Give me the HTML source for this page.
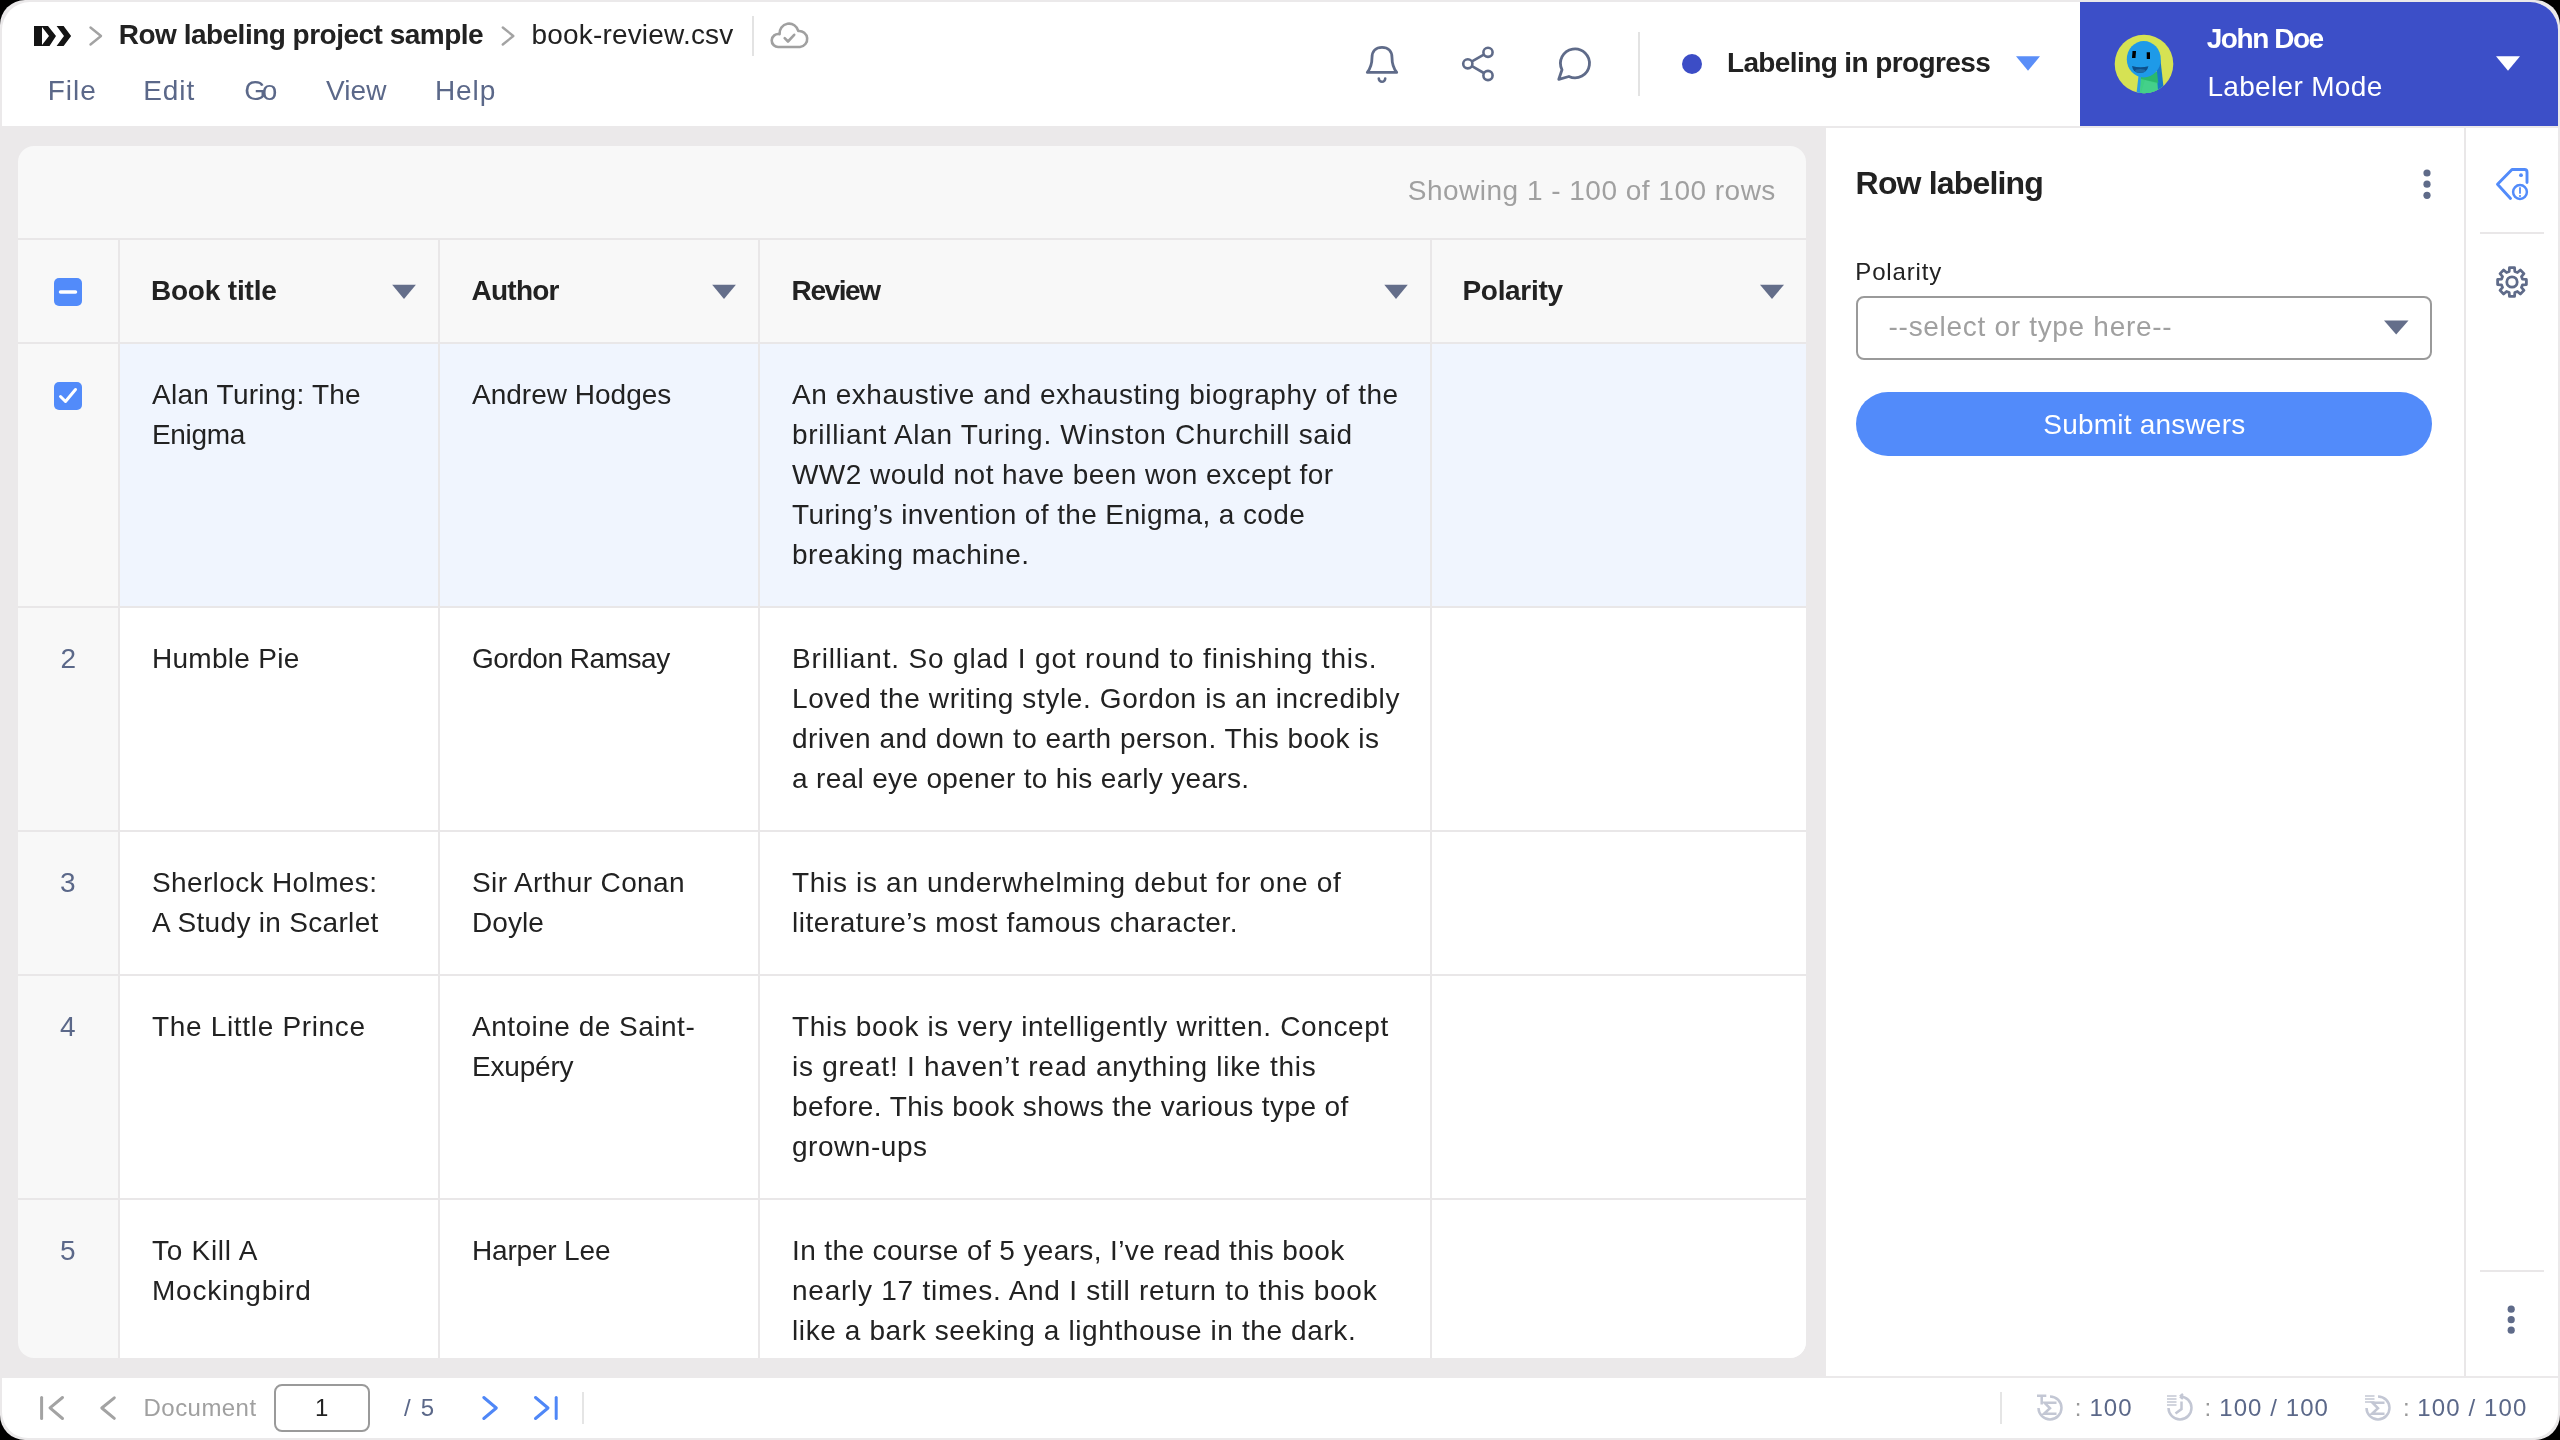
<!DOCTYPE html>
<html><head><meta charset="utf-8"><style>
html,body{margin:0;padding:0;width:2560px;height:1440px;overflow:hidden;background:#000}
.frame{position:absolute;left:0;top:0;width:2560px;height:1440px;border-radius:25px;background:#ebe9ea;overflow:hidden}
.b{position:absolute}
.tl{position:absolute;left:0;top:0;width:2560px;height:1440px;will-change:transform}
.t{position:absolute;white-space:nowrap;font-family:'Liberation Sans',sans-serif}
svg{position:absolute;left:0;top:0}
</style></head>
<body><div class="frame">
<div class="b" style="left:2px;top:2px;width:2556px;height:124px;background:#ffffff;border-radius:28px 28px 0 0"></div><div class="b" style="left:2080px;top:2px;width:478px;height:124px;background:#3c4fc8;border-radius:0 28px 0 0"></div><div class="b" style="left:18px;top:146px;width:1788px;height:1212px;background:#f8f8f8;border-radius:16px;overflow:hidden"></div><div class="b" style="left:18px;top:238px;width:1788px;height:2px;background:#e9e7e8;"></div><div class="b" style="left:18px;top:342px;width:1788px;height:2px;background:#e9e7e8;"></div><div class="b" style="left:120px;top:344px;width:1686px;height:262px;background:#f0f5fe;"></div><div class="b" style="left:18px;top:606px;width:1788px;height:2px;background:#e9e7e8;"></div><div class="b" style="left:120px;top:608px;width:1686px;height:222px;background:#ffffff;"></div><div class="b" style="left:18px;top:830px;width:1788px;height:2px;background:#e9e7e8;"></div><div class="b" style="left:120px;top:832px;width:1686px;height:142px;background:#ffffff;"></div><div class="b" style="left:18px;top:974px;width:1788px;height:2px;background:#e9e7e8;"></div><div class="b" style="left:120px;top:976px;width:1686px;height:222px;background:#ffffff;"></div><div class="b" style="left:18px;top:1198px;width:1788px;height:2px;background:#e9e7e8;"></div><div class="b" style="left:120px;top:1200px;width:1686px;height:158px;background:#ffffff;border-bottom-right-radius:16px"></div><div class="b" style="left:118px;top:240px;width:2px;height:1118px;background:#e9e7e8;"></div><div class="b" style="left:438px;top:240px;width:2px;height:1118px;background:#e9e7e8;"></div><div class="b" style="left:758px;top:240px;width:2px;height:1118px;background:#e9e7e8;"></div><div class="b" style="left:1430px;top:240px;width:2px;height:1118px;background:#e9e7e8;"></div><div class="b" style="left:1826px;top:128px;width:732px;height:1248px;background:#ffffff;"></div><div class="b" style="left:2464px;top:128px;width:2px;height:1248px;background:#e9e7e8;"></div><div class="b" style="left:2480px;top:232px;width:64px;height:2px;background:#e9e7e8;"></div><div class="b" style="left:2480px;top:1270px;width:64px;height:2px;background:#e9e7e8;"></div><div class="b" style="left:1856px;top:296px;width:576px;height:64px;background:transparent;box-sizing:border-box;border:2px solid #9a9a9a;border-radius:8px"></div><div class="b" style="left:1856px;top:392px;width:576px;height:64px;background:#528bfa;border-radius:32px"></div><div class="b" style="left:2px;top:1378px;width:2556px;height:60px;background:#ffffff;border-radius:0 0 26px 26px"></div><div class="b" style="left:274px;top:1384px;width:96px;height:48px;background:transparent;box-sizing:border-box;border:2px solid #9a9a9a;border-radius:8px"></div><div class="b" style="left:582px;top:1392px;width:2px;height:32px;background:#e5e5e5;"></div><div class="b" style="left:2000px;top:1392px;width:2px;height:32px;background:#e5e5e5;"></div><div class="b" style="left:752px;top:16px;width:2px;height:40px;background:#e3e3e3;"></div><div class="b" style="left:1638px;top:32px;width:2px;height:64px;background:#e3e3e3;"></div><div class="b" style="left:54px;top:278px;width:28px;height:28px;background:#528bfa;border-radius:5px"></div><div class="b" style="left:54px;top:382px;width:28px;height:28px;background:#528bfa;border-radius:5px"></div><div class="b" style="left:1682px;top:54px;width:20px;height:20px;background:#3c4dc6;border-radius:50%"></div>

<svg width="2560" height="1440" viewBox="0 0 2560 1440">
 <!-- logo -->
 <path d="M34 26 H48 L56 36 L49.5 46 H34 Z M42 27 V45 L49 36 Z" fill="#141414" fill-rule="evenodd"/>
 <path d="M56.6 26 H63.6 L71.1 36 L63.6 46 H56.6 L64 36 Z" fill="#141414"/>
 <!-- breadcrumb chevrons -->
 <path d="M90.5 27.5 L101 36 L90.5 44.5" fill="none" stroke="#a3a3a3" stroke-width="2.4" stroke-linecap="round" stroke-linejoin="round"/>
 <path d="M502.8 27.5 L513.3 36 L502.8 44.5" fill="none" stroke="#a3a3a3" stroke-width="2.4" stroke-linecap="round" stroke-linejoin="round"/>
 <!-- cloud -->
 <path d="M779 47 H800 A8 8 0 1 0 798.3 31 A9.5 9.5 0 0 0 779.6 34.2 A6.5 6.5 0 1 0 779 47 Z" fill="none" stroke="#a0a0a0" stroke-width="2.6" stroke-linejoin="round"/>
 <path d="M784.7 38.1 L788 41.5 L794.2 34.8" fill="none" stroke="#a0a0a0" stroke-width="2.6" stroke-linecap="round" stroke-linejoin="round"/>
 <!-- bell -->
 <path d="M1367.3 72.4 H1396.7 C1392.5 67 1392 62 1392 57.5 C1392 51 1388 47.3 1382 47.3 C1376 47.3 1372 51 1372 57.5 C1372 62 1371.5 67 1367.3 72.4 Z" fill="none" stroke="#5f6b89" stroke-width="2.8" stroke-linejoin="round"/>
 <path d="M1378.8 78.6 A3.2 3.2 0 0 0 1385.2 78.6" fill="none" stroke="#5f6b89" stroke-width="2.6" stroke-linecap="round"/>
 <!-- share -->
 <circle cx="1488" cy="52.3" r="4.6" fill="none" stroke="#5f6b89" stroke-width="2.6"/>
 <circle cx="1467.8" cy="63.8" r="4.6" fill="none" stroke="#5f6b89" stroke-width="2.6"/>
 <circle cx="1488" cy="75.5" r="4.6" fill="none" stroke="#5f6b89" stroke-width="2.6"/>
 <path d="M1472 61.4 L1483.8 54.7 M1472 66.2 L1483.8 73" stroke="#5f6b89" stroke-width="2.6"/>
 <!-- comment -->
 <path d="M1568.9 76.5 L1558.8 79.3 L1562 69.8 A14.5 14.5 0 1 1 1568.9 76.5 Z" fill="none" stroke="#5f6b89" stroke-width="2.8" stroke-linejoin="round"/>
 <!-- status triangle -->
 <path d="M2016 56.3 H2040 L2028 70.7 Z" fill="#5a8ef8"/>
 <!-- user triangle -->
 <path d="M2496 56.3 H2520 L2508 70.7 Z" fill="#ffffff"/>
 <!-- avatar -->
 <circle cx="2144" cy="64" r="29.3" fill="#d6e253"/>
 <clipPath id="av"><circle cx="2144" cy="64" r="29.3"/></clipPath>
 <g clip-path="url(#av)">
  <path d="M2138.5 76 L2141.8 76 L2140 96 L2136.2 96 Z" fill="#2a9be6"/>
  <path d="M2141 74 L2157 72 L2160 96 L2139.8 96 Z" fill="#3ecf83"/>
  <path d="M2145 80 L2158 84 L2160 96 L2140 96 Z" fill="#44d08a"/>
  <path d="M2155.5 60 L2160.5 60 L2164.5 96 L2158.5 96 Z" fill="#1878c8"/>
  <path d="M2141 74 L2157 72 L2158.3 83 L2141 79 Z" fill="#2ab86c"/>
  <ellipse cx="2143.8" cy="59.2" rx="17" ry="18.2" fill="#1e9ae8"/>
  <path d="M2132.5 51 L2136 51 L2135.5 58 L2132 58 Z" fill="#000"/>
  <path d="M2146.7 52.2 L2150 52.2 L2150 59 L2146.8 59 Z" fill="#000"/>
  <path d="M2132 66 Q2140 68.5 2148.4 66.3 Q2147 73 2140 73 Q2133 73 2132 66 Z" fill="#0d4f8a"/>
  <ellipse cx="2140.3" cy="70.8" rx="5.2" ry="1.9" fill="#1f6aa6"/>
 </g>
 <!-- header column triangles -->
 <path d="M392.2 284.8 H415.9 L404 298.9 Z" fill="#646e8a"/>
 <path d="M712.2 284.8 H735.9 L724 298.9 Z" fill="#646e8a"/>
 <path d="M1384.3 284.8 H1407.8 L1396 298.9 Z" fill="#646e8a"/>
 <path d="M1760 284.8 H1784 L1772 298.9 Z" fill="#646e8a"/>
 <!-- checkbox marks -->
 <path d="M60.5 292 H75.5" stroke="#fff" stroke-width="3.5" stroke-linecap="round"/>
 <path d="M60.5 396.5 L65.5 401.5 L75.5 389.5" fill="none" stroke="#fff" stroke-width="3" stroke-linecap="round" stroke-linejoin="round"/>
 <!-- panel kebab -->
 <circle cx="2427" cy="173" r="3.6" fill="#5f6b89"/>
 <circle cx="2427" cy="184.2" r="3.6" fill="#5f6b89"/>
 <circle cx="2427" cy="195.3" r="3.6" fill="#5f6b89"/>
 <!-- select triangle -->
 <path d="M2384 320.5 H2408.5 L2396.2 334.5 Z" fill="#646e8a"/>
 <!-- tag icon -->
 <path d="M2527 182.5 V172 Q2527 169.5 2524.5 169.5 H2512 L2497.5 184.3 L2510.5 198.5" fill="none" stroke="#528bfa" stroke-width="2.9" stroke-linecap="round" stroke-linejoin="round"/>
 <circle cx="2521" cy="175.2" r="1.9" fill="#528bfa"/>
 <circle cx="2520" cy="192" r="6.9" fill="none" stroke="#528bfa" stroke-width="2.5"/>
 <path d="M2520 188 V193" stroke="#528bfa" stroke-width="1.8" stroke-linecap="round"/>
 <circle cx="2520" cy="196" r="1.1" fill="#528bfa"/>
 <!-- gear -->
 <g transform="translate(2512 282)">
  <path d="M10.53 -2.82 L14.38 -2.54 L14.38 2.54 L10.53 2.82 L9.44 5.45 L11.96 8.37 L8.37 11.96 L5.45 9.44 L2.82 10.53 L2.54 14.38 L-2.54 14.38 L-2.82 10.53 L-5.45 9.44 L-8.37 11.96 L-11.96 8.37 L-9.44 5.45 L-10.53 2.82 L-14.38 2.54 L-14.38 -2.54 L-10.53 -2.82 L-9.44 -5.45 L-11.96 -8.37 L-8.37 -11.96 L-5.45 -9.44 L-2.82 -10.53 L-2.54 -14.38 L2.54 -14.38 L2.82 -10.53 L5.45 -9.44 L8.37 -11.96 L11.96 -8.37 L9.44 -5.45 Z" fill="none" stroke="#5f6b89" stroke-width="2.8" stroke-linejoin="round"/>
  <circle cx="0" cy="0" r="5.2" fill="none" stroke="#5f6b89" stroke-width="2.8"/>
 </g>
 <!-- rail kebab -->
 <circle cx="2511.2" cy="1309.2" r="3.6" fill="#5f6b89"/>
 <circle cx="2511.2" cy="1319.7" r="3.6" fill="#5f6b89"/>
 <circle cx="2511.2" cy="1330.2" r="3.6" fill="#5f6b89"/>
 <!-- footer nav -->
 <path d="M41.6 1397.5 V1418.5" stroke="#a3a3a3" stroke-width="3" stroke-linecap="round"/>
 <path d="M62.5 1397.5 L50 1407.8 L62.5 1418.5" fill="none" stroke="#a3a3a3" stroke-width="3" stroke-linecap="round" stroke-linejoin="round"/>
 <path d="M114.3 1397.8 L101.8 1408 L114.3 1418.3" fill="none" stroke="#a3a3a3" stroke-width="3" stroke-linecap="round" stroke-linejoin="round"/>
 <path d="M483.8 1397.5 L496.3 1408 L483.8 1418.5" fill="none" stroke="#4f87f7" stroke-width="3" stroke-linecap="round" stroke-linejoin="round"/>
 <path d="M535.5 1397.5 L548 1408 L535.5 1418.5" fill="none" stroke="#4f87f7" stroke-width="3" stroke-linecap="round" stroke-linejoin="round"/>
 <path d="M556.2 1397.5 V1418.5" stroke="#4f87f7" stroke-width="3" stroke-linecap="round"/>
 <!-- footer stats icons -->
 <g fill="none" stroke="#c3c7d4" stroke-width="2.5">
  <path d="M2050 1396.4 A11.5 11.5 0 1 1 2038.5 1408"/>
  <path d="M2037 1395.8 H2046.3 M2041.7 1395.8 V1404.6"/>
  <path d="M2056.5 1402.7 H2044.5 L2050 1408.3 L2044 1413.7 H2056.5"/>
  <path d="M2180 1396.4 A11.5 11.5 0 1 1 2168.5 1408"/>
  <path d="M2180 1396.4 L2183 1394 M2180 1396.4 L2183 1398.8"/>
  <path d="M2167 1396 H2176.5 M2167 1399 H2176.5 M2167 1402 H2176.5 M2167 1405 H2176.5" stroke-width="1.6"/>
  <path d="M2181.5 1401.5 V1409 L2175.5 1413.5"/>
  <path d="M2378 1396.4 A11.5 11.5 0 1 1 2366.5 1408"/>
  <path d="M2365 1396 H2374.5 M2365 1399 H2374.5 M2365 1402 H2374.5" stroke-width="1.6"/>
  <path d="M2384.5 1402.7 H2372.5 L2378 1408.3 L2372 1413.7 H2384.5"/>
 </g>
</svg>

<div class="tl"><div class="t" style="left:118.8px;top:15px;font-size:28px;line-height:40px;font-weight:700;color:#222222;letter-spacing:-0.512px">Row labeling project sample</div><div class="t" style="left:531.4px;top:15px;font-size:28px;line-height:40px;font-weight:400;color:#222222;letter-spacing:0.193px">book-review.csv</div><div class="t" style="left:47.7px;top:71px;font-size:28px;line-height:40px;font-weight:400;color:#5b6889;letter-spacing:1.000px">File</div><div class="t" style="left:143.3px;top:71px;font-size:28px;line-height:40px;font-weight:400;color:#5b6889;letter-spacing:0.900px">Edit</div><div class="t" style="left:244.3px;top:71px;font-size:28px;line-height:40px;font-weight:400;color:#5b6889;letter-spacing:-4.300px">Go</div><div class="t" style="left:325.9px;top:71px;font-size:28px;line-height:40px;font-weight:400;color:#5b6889;letter-spacing:0.133px">View</div><div class="t" style="left:434.9px;top:71px;font-size:28px;line-height:40px;font-weight:400;color:#5b6889;letter-spacing:0.933px">Help</div><div class="t" style="left:1726.9px;top:43px;font-size:28px;line-height:40px;font-weight:700;color:#222222;letter-spacing:-0.605px">Labeling in progress</div><div class="t" style="left:2206.7px;top:19px;font-size:28px;line-height:40px;font-weight:700;color:#ffffff;letter-spacing:-1.443px">John Doe</div><div class="t" style="left:2207.4px;top:67px;font-size:28px;line-height:40px;font-weight:400;color:#ffffff;letter-spacing:0.327px">Labeler Mode</div><div class="t" style="left:1407.8px;top:171px;font-size:28px;line-height:40px;font-weight:400;color:#a0a0a0;letter-spacing:0.487px">Showing 1 - 100 of 100 rows</div><div class="t" style="left:150.9px;top:271px;font-size:28px;line-height:40px;font-weight:700;color:#222222;letter-spacing:-0.183px">Book title</div><div class="t" style="left:471.5px;top:271px;font-size:28px;line-height:40px;font-weight:700;color:#222222;letter-spacing:-0.750px">Author</div><div class="t" style="left:791.6px;top:271px;font-size:28px;line-height:40px;font-weight:700;color:#222222;letter-spacing:-1.420px">Review</div><div class="t" style="left:1462.5px;top:271px;font-size:28px;line-height:40px;font-weight:700;color:#222222;letter-spacing:-0.314px">Polarity</div><div class="t" style="left:152.0px;top:375px;font-size:28px;line-height:40px;font-weight:400;color:#222222;letter-spacing:0.250px">Alan Turing: The</div><div class="t" style="left:152.0px;top:415px;font-size:28px;line-height:40px;font-weight:400;color:#222222;letter-spacing:-0.340px">Enigma</div><div class="t" style="left:472.0px;top:375px;font-size:28px;line-height:40px;font-weight:400;color:#222222;letter-spacing:0.008px">Andrew Hodges</div><div class="t" style="left:792.0px;top:375px;font-size:28px;line-height:40px;font-weight:400;color:#222222;letter-spacing:0.545px">An exhaustive and exhausting biography of the</div><div class="t" style="left:792.0px;top:415px;font-size:28px;line-height:40px;font-weight:400;color:#222222;letter-spacing:0.705px">brilliant Alan Turing. Winston Churchill said</div><div class="t" style="left:792.0px;top:455px;font-size:28px;line-height:40px;font-weight:400;color:#222222;letter-spacing:0.446px">WW2 would not have been won except for</div><div class="t" style="left:792.0px;top:495px;font-size:28px;line-height:40px;font-weight:400;color:#222222;letter-spacing:0.378px">Turing’s invention of the Enigma, a code</div><div class="t" style="left:792.0px;top:535px;font-size:28px;line-height:40px;font-weight:400;color:#222222;letter-spacing:0.516px">breaking machine.</div><div class="t" style="left:152.0px;top:639px;font-size:28px;line-height:40px;font-weight:400;color:#222222;letter-spacing:0.289px">Humble Pie</div><div class="t" style="left:472.0px;top:639px;font-size:28px;line-height:40px;font-weight:400;color:#222222;letter-spacing:-0.475px">Gordon Ramsay</div><div class="t" style="left:792.0px;top:639px;font-size:28px;line-height:40px;font-weight:400;color:#222222;letter-spacing:0.828px">Brilliant. So glad I got round to finishing this.</div><div class="t" style="left:792.0px;top:679px;font-size:28px;line-height:40px;font-weight:400;color:#222222;letter-spacing:0.606px">Loved the writing style. Gordon is an incredibly</div><div class="t" style="left:792.0px;top:719px;font-size:28px;line-height:40px;font-weight:400;color:#222222;letter-spacing:0.477px">driven and down to earth person. This book is</div><div class="t" style="left:792.0px;top:759px;font-size:28px;line-height:40px;font-weight:400;color:#222222;letter-spacing:0.333px">a real eye opener to his early years.</div><div class="t" style="left:152.0px;top:863px;font-size:28px;line-height:40px;font-weight:400;color:#222222;letter-spacing:0.367px">Sherlock Holmes:</div><div class="t" style="left:152.0px;top:903px;font-size:28px;line-height:40px;font-weight:400;color:#222222;letter-spacing:0.312px">A Study in Scarlet</div><div class="t" style="left:472.0px;top:863px;font-size:28px;line-height:40px;font-weight:400;color:#222222;letter-spacing:0.373px">Sir Arthur Conan</div><div class="t" style="left:472.0px;top:903px;font-size:28px;line-height:40px;font-weight:400;color:#222222;letter-spacing:0.075px">Doyle</div><div class="t" style="left:792.0px;top:863px;font-size:28px;line-height:40px;font-weight:400;color:#222222;letter-spacing:0.681px">This is an underwhelming debut for one of</div><div class="t" style="left:792.0px;top:903px;font-size:28px;line-height:40px;font-weight:400;color:#222222;letter-spacing:0.529px">literature’s most famous character.</div><div class="t" style="left:152.0px;top:1007px;font-size:28px;line-height:40px;font-weight:400;color:#222222;letter-spacing:0.675px">The Little Prince</div><div class="t" style="left:472.0px;top:1007px;font-size:28px;line-height:40px;font-weight:400;color:#222222;letter-spacing:0.494px">Antoine de Saint-</div><div class="t" style="left:472.0px;top:1047px;font-size:28px;line-height:40px;font-weight:400;color:#222222;letter-spacing:-0.200px">Exupéry</div><div class="t" style="left:792.0px;top:1007px;font-size:28px;line-height:40px;font-weight:400;color:#222222;letter-spacing:0.633px">This book is very intelligently written. Concept</div><div class="t" style="left:792.0px;top:1047px;font-size:28px;line-height:40px;font-weight:400;color:#222222;letter-spacing:0.762px">is great! I haven’t read anything like this</div><div class="t" style="left:792.0px;top:1087px;font-size:28px;line-height:40px;font-weight:400;color:#222222;letter-spacing:0.399px">before. This book shows the various type of</div><div class="t" style="left:792.0px;top:1127px;font-size:28px;line-height:40px;font-weight:400;color:#222222;letter-spacing:0.531px">grown-ups</div><div class="t" style="left:152.0px;top:1231px;font-size:28px;line-height:40px;font-weight:400;color:#222222;letter-spacing:0.725px">To Kill A</div><div class="t" style="left:152.0px;top:1271px;font-size:28px;line-height:40px;font-weight:400;color:#222222;letter-spacing:0.780px">Mockingbird</div><div class="t" style="left:472.0px;top:1231px;font-size:28px;line-height:40px;font-weight:400;color:#222222;letter-spacing:-0.178px">Harper Lee</div><div class="t" style="left:792.0px;top:1231px;font-size:28px;line-height:40px;font-weight:400;color:#222222;letter-spacing:0.381px">In the course of 5 years, I’ve read this book</div><div class="t" style="left:792.0px;top:1271px;font-size:28px;line-height:40px;font-weight:400;color:#222222;letter-spacing:0.750px">nearly 17 times. And I still return to this book</div><div class="t" style="left:792.0px;top:1311px;font-size:28px;line-height:40px;font-weight:400;color:#222222;letter-spacing:0.608px">like a bark seeking a lighthouse in the dark.</div><div class="t" style="left:60.5px;top:639px;font-size:28px;line-height:40px;font-weight:400;color:#5b6889;letter-spacing:0.000px">2</div><div class="t" style="left:60.0px;top:863px;font-size:28px;line-height:40px;font-weight:400;color:#5b6889;letter-spacing:0.000px">3</div><div class="t" style="left:60.0px;top:1007px;font-size:28px;line-height:40px;font-weight:400;color:#5b6889;letter-spacing:0.000px">4</div><div class="t" style="left:60.0px;top:1231px;font-size:28px;line-height:40px;font-weight:400;color:#5b6889;letter-spacing:0.000px">5</div><div class="t" style="left:1855.6px;top:160px;font-size:32px;line-height:46px;font-weight:700;color:#222222;letter-spacing:-0.827px">Row labeling</div><div class="t" style="left:1855.3px;top:255px;font-size:24px;line-height:34px;font-weight:400;color:#222222;letter-spacing:0.829px">Polarity</div><div class="t" style="left:1888.6px;top:307px;font-size:28px;line-height:40px;font-weight:400;color:#a0a0a0;letter-spacing:0.695px">--select or type here--</div><div class="t" style="left:2043.3px;top:405px;font-size:28px;line-height:40px;font-weight:400;color:#ffffff;letter-spacing:0.208px">Submit answers</div><div class="t" style="left:143.6px;top:1391px;font-size:24px;line-height:34px;font-weight:400;color:#a0a0a0;letter-spacing:0.443px">Document</div><div class="t" style="left:315.1px;top:1391px;font-size:24px;line-height:34px;font-weight:400;color:#222222;letter-spacing:0.000px">1</div><div class="t" style="left:404.1px;top:1391px;font-size:24px;line-height:34px;font-weight:400;color:#5b6889;letter-spacing:1.600px">/ 5</div><div class="t" style="left:2089.5px;top:1391px;font-size:24px;line-height:34px;font-weight:400;color:#5b6889;letter-spacing:1.000px">100</div><div class="t" style="left:2219.3px;top:1391px;font-size:24px;line-height:34px;font-weight:400;color:#5b6889;letter-spacing:1.062px">100 / 100</div><div class="t" style="left:2417.3px;top:1391px;font-size:24px;line-height:34px;font-weight:400;color:#5b6889;letter-spacing:1.125px">100 / 100</div><div class="t" style="left:2074.8px;top:1391px;font-size:24px;line-height:34px;font-weight:400;color:#999999;letter-spacing:0.000px">:</div><div class="t" style="left:2204.5px;top:1391px;font-size:24px;line-height:34px;font-weight:400;color:#999999;letter-spacing:0.000px">:</div><div class="t" style="left:2403.0px;top:1391px;font-size:24px;line-height:34px;font-weight:400;color:#999999;letter-spacing:0.000px">:</div></div>
</div></body></html>
